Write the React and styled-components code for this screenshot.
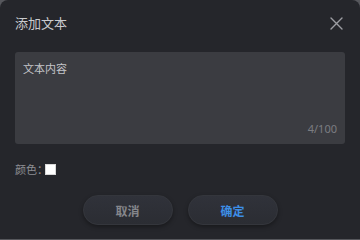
import styled, { createGlobalStyle } from "styled-components";

const GlobalStyle = createGlobalStyle`
  html, body {
    margin: 0;
    padding: 0;
    background: #56575c;
  }
  body {
    font-family: "Noto Sans CJK SC", "Noto Sans", sans-serif;
  }
`;

const Dialog = styled.div`
  width: 360px;
  height: 239px;
  box-sizing: border-box;
  background: #25262b;
  border-radius: 8px 8px 0 0;
  padding: 0 15px;
  display: flex;
  flex-direction: column;
`;

const Header = styled.div`
  height: 46px;
  display: flex;
  align-items: center;
  justify-content: space-between;
`;

const Title = styled.div`
  font-size: 13px;
  color: #c9cace;
  margin-top: -1px;
`;

const CloseButton = styled.button`
  width: 16px;
  height: 16px;
  padding: 0;
  border: 0;
  background: none;
  display: flex;
  align-items: center;
  justify-content: center;
  margin-right: 1px;
  cursor: pointer;
`;

const TextBox = styled.div`
  position: relative;
  margin-top: 6px;
  height: 92px;
  background: #3b3c41;
  border-radius: 3px;
  box-sizing: border-box;
  padding: 7px 8px;
`;

const TextInput = styled.div`
  font-size: 11px;
  color: #c4c5c9;
  line-height: 18px;
`;

const Counter = styled.span`
  position: absolute;
  right: 8px;
  bottom: 8px;
  font-family: "Noto Sans", sans-serif;
  font-size: 11px;
  color: #7b7c81;
`;

const ColorRow = styled.div`
  margin-top: 17px;
  display: flex;
  align-items: center;
  font-size: 11px;
  color: #8e8f94;
`;

const Swatch = styled.span`
  width: 11px;
  height: 11px;
  box-sizing: border-box;
  background: ${(p) => p.color};
  border: 1px solid #d8d8d8;
  margin-left: -3px;
`;

const Footer = styled.div`
  margin-top: 18px;
  display: flex;
  justify-content: center;
  gap: 15px;
`;

const Button = styled.button`
  width: 90px;
  height: 30px;
  border-radius: 15px;
  border: 1px solid #34363c;
  background: linear-gradient(#30323a, #2b2d33);
  box-shadow: 0 2px 4px rgba(0, 0, 0, 0.35);
  font-family: "Noto Sans CJK SC", sans-serif;
  font-size: 12px;
  font-weight: 700;
  color: ${(p) => (p.primary ? "#3d8ee6" : "#85868b")};
  cursor: pointer;
`;

export default function App() {
  return (
    <>
      <GlobalStyle />
      <Dialog>
        <Header>
          <Title>添加文本</Title>
          <CloseButton aria-label="关闭">
            <svg width="13" height="13" viewBox="0 0 13 13">
              <path
                d="M1 1L12 12M12 1L1 12"
                stroke="#9c9da2"
                strokeWidth="1.4"
                strokeLinecap="round"
              />
            </svg>
          </CloseButton>
        </Header>
        <TextBox>
          <TextInput>文本内容</TextInput>
          <Counter>4/100</Counter>
        </TextBox>
        <ColorRow>
          颜色：
          <Swatch color="#ffffff" />
        </ColorRow>
        <Footer>
          <Button>取消</Button>
          <Button primary>确定</Button>
        </Footer>
      </Dialog>
    </>
  );
}
